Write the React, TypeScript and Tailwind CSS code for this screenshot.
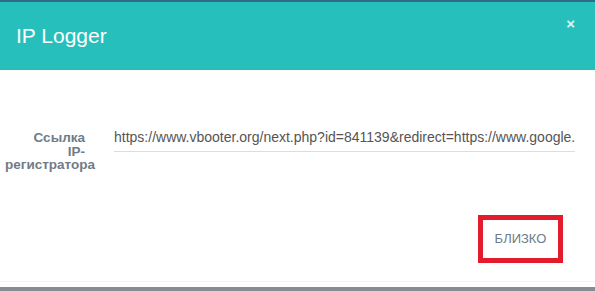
export default function App() {
  const url =
    "https://www.vbooter.org/next.php?id=841139&redirect=https://www.google.";

  return (
    <div className="w-[595px] h-[291px] bg-white flex flex-col overflow-hidden font-['Liberation_Sans',Arial,sans-serif]">
      {/* modal header */}
      <div className="h-[2px] bg-[#2e6c84]" />
      <div className="h-[68px] bg-[#26bfbb] flex items-center justify-between pl-4 pr-[20px]">
        <h4 className="text-[21px] leading-6 text-white">IP Logger</h4>
        <button className="self-start mt-[14px] text-[15px] leading-4 font-bold text-white/85">
          ×
        </button>
      </div>

      {/* body */}
      <div className="h-[130px] pt-[59px] flex items-start">
        <label className="ml-[5px] mt-[2px] w-[80px] text-right text-[13.5px] leading-[13.5px] font-bold text-[#6f7b88]">
          <div>Ссылка</div>
          <div>IP-</div>
          <div className="whitespace-nowrap">регистратора</div>
        </label>
        <div className="ml-[29px] w-[461px] border-b border-[#dddddd] pb-[6px]">
          <div className="whitespace-nowrap text-[14px] leading-4 text-[#555555]">
            {url}
          </div>
        </div>
      </div>

      {/* footer */}
      <div className="h-[81px] flex justify-end items-start pt-[15px] pr-[32px]">
        <button className="w-[85px] h-[48px] border-[5px] border-[#e31b2c] text-[13px] text-[#6e7b85] uppercase">
          Близко
        </button>
      </div>
      <div className="h-px bg-[#f2f2f2]" />
      <div className="h-[5px]" />
      <div className="flex-1 bg-[#878c93]" />
    </div>
  );
}
